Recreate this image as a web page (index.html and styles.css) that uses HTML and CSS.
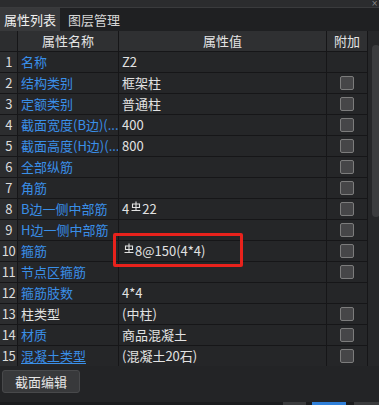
FILE: index.html
```html
<!DOCTYPE html>
<html lang="zh">
<head>
  <meta charset="UTF-8" />
  <title>属性列表</title>
  <link rel="stylesheet" href="styles.css">
</head>
<body>
  <div class="panel">
    <div class="title-strip"><span class="close">×</span></div>

    <div class="tabs">
      <div class="tab active">属性列表</div>
      <div class="tab">图层管理</div>
    </div>

    <div class="grid-wrap">
      <div class="grid">
        <div class="head num"></div>
        <div class="head">属性名称</div>
        <div class="head">属性值</div>
        <div class="head">附加</div>

        <div class="num">1</div><div class="name">名称</div><div class="val">Z2</div><div class="extra"></div>
        <div class="num">2</div><div class="name">结构类别</div><div class="val">框架柱</div><div class="extra"><span class="check"></span></div>
        <div class="num">3</div><div class="name">定额类别</div><div class="val">普通柱</div><div class="extra"><span class="check"></span></div>
        <div class="num">4</div><div class="name">截面宽度(B边)(...</div><div class="val">400</div><div class="extra"><span class="check"></span></div>
        <div class="num">5</div><div class="name">截面高度(H边)(...</div><div class="val">800</div><div class="extra"><span class="check"></span></div>
        <div class="num">6</div><div class="name">全部纵筋</div><div class="val"></div><div class="extra"><span class="check"></span></div>
        <div class="num">7</div><div class="name">角筋</div><div class="val"></div><div class="extra"><span class="check"></span></div>
        <div class="num">8</div><div class="name">B边一侧中部筋</div><div class="val">4<svg class="bar" viewBox="0 0 10 11"><path d="M5 0.5V9 M1.5 3h7v3.5h-7z M0.5 9.5h9" /></svg>22</div><div class="extra"><span class="check"></span></div>
        <div class="num">9</div><div class="name">H边一侧中部筋</div><div class="val"></div><div class="extra"><span class="check"></span></div>
        <div class="num">10</div><div class="name">箍筋</div><div class="val"><svg class="bar" viewBox="0 0 10 11"><path d="M5 0.5V9 M1.5 3h7v3.5h-7z M0.5 9.5h9" /></svg>8@150(4*4)</div><div class="extra"><span class="check"></span></div>
        <div class="num">11</div><div class="name">节点区箍筋</div><div class="val"></div><div class="extra"><span class="check"></span></div>
        <div class="num">12</div><div class="name">箍筋肢数</div><div class="val">4*4</div><div class="extra"></div>
        <div class="num">13</div><div class="name plain">柱类型</div><div class="val">(中柱)</div><div class="extra"><span class="check"></span></div>
        <div class="num">14</div><div class="name">材质</div><div class="val">商品混凝土</div><div class="extra"><span class="check"></span></div>
        <div class="num">15</div><div class="name link">混凝土类型</div><div class="val">(混凝土20石)</div><div class="extra"><span class="check"></span></div>
        <div class="num"></div><div class="name"></div><div class="val"></div><div class="extra"></div>
      </div>
      <div class="scroll"><div class="thumb"></div></div>
      <div class="mark"></div>
    </div>

    <div class="footer">
      <button type="button" class="edit-btn">截面编辑</button>
    </div>

    <div class="status">
      <span class="seg grey1"></span>
      <span class="seg blue"></span>
      <span class="seg grey2"></span>
    </div>
  </div>
</body>
</html>
```

FILE: styles.css
```css
body {
  margin: 0;
  background: #232426;
  font-family: "Noto Sans CJK SC", "Noto Sans", sans-serif;
  font-size: 13px;
  color: #e2e2e2;
}
.panel {
  width: 379px;
  height: 405px;
  overflow: hidden;
  display: flex;
  flex-direction: column;
}
.title-strip {
  height: 7px;
  background: #2b2c2e;
  border-bottom: 1px solid #3a3b3d;
  display: flex;
  justify-content: flex-end;
  overflow: hidden;
}
.close {
  font-family: "DejaVu Sans", sans-serif;
  font-size: 8px;
  line-height: 7px;
  color: #8a8a8a;
  margin-right: 1px;
}
.tabs {
  height: 23px;
  background: #1f2022;
  display: flex;
}
.tab {
  padding: 0 4px;
  line-height: 23px;
  font-size: 13px;
  color: #d6d6d6;
}
.tab.active {
  background: #38393b;
  color: #f0f0f0;
  width: 52px;
  margin-right: 4px;
}
.grid-wrap {
  height: 339px;
  display: flex;
  position: relative;
  overflow: hidden;
}
.grid {
  width: 367px;
  border-right: 1px solid #161618;
  display: grid;
  grid-template-columns: 17px 100px 207px 40px;
  grid-auto-rows: 20px;
  gap: 1px;
  background: #161618;
  align-content: start;
}
.grid > div {
  background: #252628;
  line-height: 20px;
  white-space: nowrap;
  overflow: hidden;
}
.grid > .head {
  background: #2f3032;
  text-align: center;
  color: #e4e4e4;
}
.grid > .num {
  background: #2c2d2f;
  text-align: center;
  color: #dcdcdc;
  font-size: 13px;
  letter-spacing: -0.5px;
}
.name {
  color: #3a8fe8;
  padding-left: 3px;
}
.name.plain {
  color: #e2e2e2;
}
.name.link {
  text-decoration: underline;
  text-underline-offset: 2px;
}
.val {
  padding-left: 3px;
}
.bar {
  width: 10px;
  height: 11px;
  margin: 0 1px 0 2px;
  vertical-align: 2px;
  fill: none;
  stroke: #e2e2e2;
  stroke-width: 1.1;
}
.extra {
  display: flex;
  justify-content: center;
  align-items: center;
}
.check {
  width: 12px;
  height: 12px;
  background: #464648;
  border: 1px solid #7c7c7c;
  border-radius: 2px;
}
.scroll {
  width: 11px;
  background: #262729;
  padding-left: 4px;
  padding-top: 14px;
}
.thumb {
  width: 8px;
  height: 172px;
  background: #3b3c3e;
  border-radius: 4px;
}
.mark {
  position: absolute;
  left: 113px;
  top: 202px;
  width: 124px;
  height: 28px;
  border: 3px solid #e8221c;
  border-radius: 2px;
}
.footer {
  height: 32px;
  padding: 4px 0 0 2px;
  display: flex;
  align-items: flex-start;
}
.edit-btn {
  width: 78px;
  height: 23px;
  line-height: 21px;
  background: #38393b;
  border: 1px solid #48494b;
  border-radius: 3px;
  color: #e6e6e6;
  font-family: "Noto Sans CJK SC", sans-serif;
  font-size: 13px;
  padding: 0;
}
.status {
  height: 3px;
  background: #1b1c1e;
  display: flex;
}
.seg {
  height: 3px;
}
.grey1 {
  margin-left: 283px;
  width: 23px;
  background: #3a3b3d;
}
.blue {
  margin-left: 6px;
  width: 34px;
  background: #2f7fd8;
}
.grey2 {
  margin-left: 8px;
  width: 25px;
  background: #3a3b3d;
}
```
